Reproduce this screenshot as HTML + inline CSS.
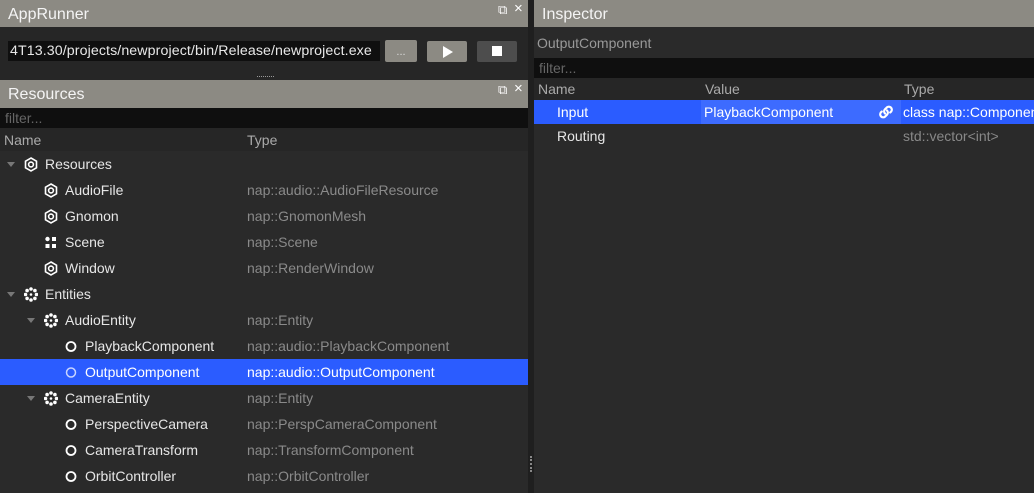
<!DOCTYPE html><html><head><style>
*{margin:0;padding:0;box-sizing:border-box}
body{width:1034px;height:493px;background:#1f1f1f;font-family:"Liberation Sans",sans-serif;font-size:14px;color:#e6e6e6;position:relative;overflow:hidden}
.abs{position:absolute}
.title{background:#8c8a83;height:27px;color:#f4f4f4;font-size:16px;line-height:29px;padding-left:8px}
.row{position:absolute;left:0;width:528px;height:26px;line-height:26px}
.t{position:absolute;left:247px;color:#8a8a8a}
.ic{position:absolute;top:6px}
.arr{position:absolute;top:11px;width:0;height:0;border-left:4px solid transparent;border-right:4px solid transparent;border-top:5px solid #777}
</style></head><body>
<div class="abs" style="left:0;top:0;width:528px;height:493px;background:#2a2a2a"></div>
<div class="abs title" style="left:0;top:0;width:528px">AppRunner</div>
<div class="abs" style="left:498px;top:2px;color:#fff;font-size:13px">&#x29C9;</div>
<div class="abs" style="left:514px;top:0px;color:#fff;font-size:15px">×</div>
<div class="abs" style="left:0;top:27px;width:528px;height:47px;background:#262626"></div>
<div class="abs" style="left:8px;top:41px;width:372px;height:20px;background:#0f0f0f;color:#e8e8e8;font-size:14.2px;line-height:20px;padding-left:2px;letter-spacing:0.1px;white-space:nowrap;overflow:hidden">4T13.30/projects/newproject/bin/Release/newproject.exe</div>
<div class="abs" style="left:385px;top:40px;width:32px;height:22px;background:#8c8a83;border-radius:2px;color:#ddd;font-size:11px;text-align:center;line-height:24px">...</div>
<div class="abs" style="left:427px;top:41px;width:40px;height:21px;background:#8c8a83;border-radius:2px"><div style="position:absolute;left:16px;top:5px;border-top:6px solid transparent;border-bottom:6px solid transparent;border-left:10px solid #fff"></div></div>
<div class="abs" style="left:477px;top:41px;width:40px;height:21px;background:#4d4d4d;border-radius:2px"><div style="position:absolute;left:15px;top:5px;width:10px;height:10px;background:#fff"></div></div>
<div class="abs" style="left:0;top:74px;width:528px;height:6px;background:#262626"><div style="position:absolute;left:257px;top:2px;width:17px;border-top:1px dotted #999"></div></div>
<div class="abs title" style="left:0;top:80px;width:528px;height:28px;line-height:30px">Resources</div>
<div class="abs" style="left:498px;top:82px;color:#fff;font-size:13px">&#x29C9;</div>
<div class="abs" style="left:514px;top:80px;color:#fff;font-size:15px">×</div>
<div class="abs" style="left:0;top:108px;width:528px;height:20px;background:#0f0f0f;color:#666;line-height:20px;padding-left:5px">filter...</div>
<div class="abs" style="left:0;top:128px;width:528px;height:23px;background:#262626;color:#aaa;line-height:24px"><span style="position:absolute;left:4px">Name</span><span style="position:absolute;left:247px">Type</span></div>

<svg width="0" height="0" style="position:absolute"><defs>
<g id="hex"><path d="M7 1L12.5 4.2V10.8L7 14L1.5 10.8V4.2Z" fill="none" stroke="#fff" stroke-width="1.6"/><circle cx="7" cy="7.5" r="2.4" fill="none" stroke="#fff" stroke-width="1.6"/></g>
<g id="ent" fill="#fff"><circle cx="7" cy="2" r="1.8"/><circle cx="7" cy="13" r="1.8"/><circle cx="1.5" cy="7.5" r="1.8"/><circle cx="12.5" cy="7.5" r="1.8"/><circle cx="3.1" cy="3.6" r="1.8"/><circle cx="10.9" cy="3.6" r="1.8"/><circle cx="3.1" cy="11.4" r="1.8"/><circle cx="10.9" cy="11.4" r="1.8"/><circle cx="7" cy="7.5" r="1.3"/></g>
<g id="sc" fill="#fff"><circle cx="3.5" cy="4" r="2.2"/><rect x="8" y="2" width="4" height="4"/><rect x="1.5" y="9" width="4" height="4"/><rect x="8" y="9" width="4" height="4"/></g>
<g id="cir"><circle cx="7" cy="7.5" r="4.5" fill="none" stroke="#fff" stroke-width="1.8"/></g>
</defs></svg>

<div class="row" style="top:151px"><div class="arr" style="left:7px"></div><svg class="ic" style="left:24px" width="14" height="15"><use href="#hex"/></svg><span style="position:absolute;left:45px">Resources</span></div>
<div class="row" style="top:177px"><svg class="ic" style="left:44px" width="14" height="15"><use href="#hex"/></svg><span style="position:absolute;left:65px">AudioFile</span><span class="t">nap::audio::AudioFileResource</span></div>
<div class="row" style="top:203px"><svg class="ic" style="left:44px" width="14" height="15"><use href="#hex"/></svg><span style="position:absolute;left:65px">Gnomon</span><span class="t">nap::GnomonMesh</span></div>
<div class="row" style="top:229px"><svg class="ic" style="left:44px" width="14" height="15"><use href="#sc"/></svg><span style="position:absolute;left:65px">Scene</span><span class="t">nap::Scene</span></div>
<div class="row" style="top:255px"><svg class="ic" style="left:44px" width="14" height="15"><use href="#hex"/></svg><span style="position:absolute;left:65px">Window</span><span class="t">nap::RenderWindow</span></div>
<div class="row" style="top:281px"><div class="arr" style="left:7px"></div><svg class="ic" style="left:24px" width="14" height="15"><use href="#ent"/></svg><span style="position:absolute;left:45px">Entities</span></div>
<div class="row" style="top:307px"><div class="arr" style="left:27px"></div><svg class="ic" style="left:44px" width="14" height="15"><use href="#ent"/></svg><span style="position:absolute;left:65px">AudioEntity</span><span class="t">nap::Entity</span></div>
<div class="row" style="top:333px"><svg class="ic" style="left:64px" width="14" height="15"><use href="#cir"/></svg><span style="position:absolute;left:85px">PlaybackComponent</span><span class="t">nap::audio::PlaybackComponent</span></div>
<div class="row" style="top:359px;background:#2b5cff"><svg class="ic" style="left:64px" width="14" height="15"><circle cx="7" cy="7.5" r="4.5" fill="none" stroke="#c8d4ff" stroke-width="1.5"/></svg><span style="position:absolute;left:85px;color:#fff">OutputComponent</span><span class="t" style="color:#fff">nap::audio::OutputComponent</span></div>
<div class="row" style="top:385px"><div class="arr" style="left:27px"></div><svg class="ic" style="left:44px" width="14" height="15"><use href="#ent"/></svg><span style="position:absolute;left:65px">CameraEntity</span><span class="t">nap::Entity</span></div>
<div class="row" style="top:411px"><svg class="ic" style="left:64px" width="14" height="15"><use href="#cir"/></svg><span style="position:absolute;left:85px">PerspectiveCamera</span><span class="t">nap::PerspCameraComponent</span></div>
<div class="row" style="top:437px"><svg class="ic" style="left:64px" width="14" height="15"><use href="#cir"/></svg><span style="position:absolute;left:85px">CameraTransform</span><span class="t">nap::TransformComponent</span></div>
<div class="row" style="top:463px"><svg class="ic" style="left:64px" width="14" height="15"><use href="#cir"/></svg><span style="position:absolute;left:85px">OrbitController</span><span class="t">nap::OrbitController</span></div>
<div class="abs" style="left:530px;top:456px;width:2px;height:16px;border-left:2px dotted #888"></div>

<div class="abs" style="left:534px;top:0;width:500px;height:493px;background:#2a2a2a"></div>
<div class="abs title" style="left:534px;top:0;width:500px">Inspector</div>
<div class="abs" style="left:537px;top:35px;color:#999;font-size:14px">OutputComponent</div>
<div class="abs" style="left:534px;top:58px;width:500px;height:20px;background:#0f0f0f;color:#666;line-height:20px;padding-left:5px">filter...</div>
<div class="abs" style="left:534px;top:78px;width:500px;height:22px;background:#262626;color:#aaa;line-height:22px"><span style="position:absolute;left:4px">Name</span><span style="position:absolute;left:171px">Value</span><span style="position:absolute;left:370px">Type</span></div>
<div class="abs" style="left:534px;top:100px;width:500px;height:24px;background:#2b5cff;line-height:24px;color:#fff"><div style="position:absolute;left:167px;top:0;width:200px;height:24px;background:#3d6bff"></div><span style="position:absolute;left:23px">Input</span><span style="position:absolute;left:170px">PlaybackComponent</span>
<svg style="position:absolute;left:344px;top:4px" width="16" height="16" viewBox="0 0 16 16"><g fill="none" stroke="#fff" stroke-width="2.2" stroke-linecap="round"><path d="M7 9.5a3 3 0 0 1 0-4.2l2-2a3 3 0 0 1 4.2 4.2l-1 1"/><path d="M9 6.5a3 3 0 0 1 0 4.2l-2 2a3 3 0 0 1-4.2-4.2l1-1"/></g></svg>
<span style="position:absolute;left:369px;white-space:nowrap">class nap::Component</span></div>
<div class="abs" style="left:534px;top:124px;width:500px;height:24px;line-height:24px"><span style="position:absolute;left:23px">Routing</span><span style="position:absolute;left:369px;color:#888">std::vector&lt;int&gt;</span></div>
</body></html>
